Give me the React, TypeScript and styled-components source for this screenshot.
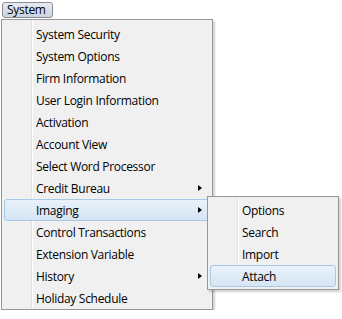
import React, { FC } from 'react';
import styled, { createGlobalStyle } from 'styled-components';

const GlobalStyle = createGlobalStyle`
  body {
    margin: 0;
    background: #fff;
    font-family: "Open Sans", "Noto Sans", sans-serif;
    font-size: 12px;
    letter-spacing: -0.3px;
    color: #000;
  }
`;

const StyledBar = styled.div`
  padding: 2px 0 0 2px;
`;

const StyledBarButton = styled.div`
  box-sizing: border-box;
  width: 51px;
  height: 16px;
  padding-left: 4px;
  display: flex;
  align-items: center;
  border: 1px solid #8a8d92;
  border-radius: 3px;
  background: linear-gradient(#e6ebf1, #cbd4df);
  line-height: 1;
`;

const StyledMenu = styled.div<{ $width: number }>`
  box-sizing: border-box;
  width: ${(p) => p.$width}px;
  border: 1px solid #979797;
  padding: 2px;
  background: linear-gradient(
    to right,
    #f0f0f0 29px,
    #e2e3e3 29px,
    #e2e3e3 30px,
    #ffffff 30px,
    #ffffff 31px,
    #f0f0f0 31px
  );
  box-shadow: 2px 2px 2px rgba(0, 0, 0, 0.18);
`;

const StyledMainMenu = styled(StyledMenu)`
  margin: 1px 0 0 1px;
  padding-top: 3px;
  padding-bottom: 0;
`;

const StyledSubMenu = styled(StyledMenu)`
  position: absolute;
  left: 202px;
  top: -4px;
  z-index: 2;
`;

const StyledItem = styled.div<{ $active?: boolean }>`
  position: relative;
  box-sizing: border-box;
  height: 22px;
  display: flex;
  align-items: center;
  padding-left: 31px;
  border: 1px solid ${(p) => (p.$active ? '#a8cae6' : 'transparent')};
  border-radius: 3px;
  background: ${(p) =>
    p.$active ? 'linear-gradient(#e9f2fb, #d5e5f3)' : 'transparent'};
  white-space: nowrap;
`;

const StyledArrow = styled.span`
  margin-left: auto;
  margin-right: 7px;
  width: 0;
  height: 0;
  border-top: 3.5px solid transparent;
  border-bottom: 3.5px solid transparent;
  border-left: 4px solid #000;
`;

const mainItems = [
  'System Security',
  'System Options',
  'Firm Information',
  'User Login Information',
  'Activation',
  'Account View',
  'Select Word Processor',
  'Credit Bureau',
  'Imaging',
  'Control Transactions',
  'Extension Variable',
  'History',
  'Holiday Schedule'
];

const withSubmenu = ['Credit Bureau', 'Imaging', 'History'];

const imagingItems = ['Options', 'Search', 'Import', 'Attach'];

const SubMenu: FC = () => (
  <StyledSubMenu $width={132}>
    {imagingItems.map((label) => (
      <StyledItem key={label} $active={label === 'Attach'}>
        {label}
      </StyledItem>
    ))}
  </StyledSubMenu>
);

const App: FC = () => (
  <>
    <GlobalStyle />
    <StyledBar>
      <StyledBarButton>System</StyledBarButton>
    </StyledBar>
    <StyledMainMenu $width={212}>
      {mainItems.map((label) => (
        <StyledItem key={label} $active={label === 'Imaging'}>
          {label}
          {withSubmenu.includes(label) && <StyledArrow />}
          {label === 'Imaging' && <SubMenu />}
        </StyledItem>
      ))}
    </StyledMainMenu>
  </>
);

export default App;
